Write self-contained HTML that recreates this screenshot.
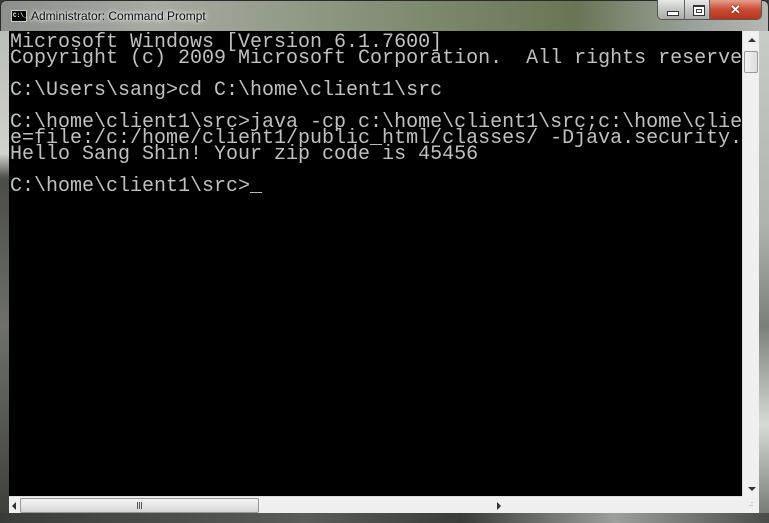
<!DOCTYPE html>
<html><head><meta charset="utf-8"><style>
*{margin:0;padding:0;box-sizing:border-box}
body{width:769px;height:523px;overflow:hidden;background:#3a3e38;position:relative;font-family:"Liberation Sans",sans-serif}
.frame{position:absolute;left:0;top:0;width:769px;height:523px;border:1px solid #2a2a2a;border-radius:6px 6px 0 0;
background:linear-gradient(90deg,#8c8f8a 0%,#a7aba4 20%,#7e8a6e 55%,#6a7555 75%,#9aa19a 90%,#b5b8b3 100%);}
.left{position:absolute;left:0;top:31px;width:9px;height:492px;background:linear-gradient(180deg,#b9bcb8 0%,#d0d2cf 25%,#9a9d99 27%,#4a4c49 30%,#6e706d 60%,#3c3e3b 100%)}
.right{position:absolute;right:0;top:31px;width:10px;height:492px;background:linear-gradient(180deg,#c9cbc8 0%,#aeb1ad 40%,#7c7f7b 60%,#d8dad7 80%,#6e716d 100%)}
.bottom{position:absolute;left:0;top:513px;width:769px;height:10px;background:linear-gradient(90deg,#3a3c39,#5a5c59 40%,#3a3c39 60%,#9c9f9b 80%,#4a4c49)}
.title{position:absolute;left:31px;top:9px;font-size:12px;color:#111;text-shadow:0 0 6px #fff,0 0 3px #fff}
.ico{position:absolute;left:11px;top:10px;width:16px;height:12px;background:#000;border:1px solid #ccc;color:#fff;font:bold 6px "Liberation Mono",monospace;line-height:10px;padding-left:1px}
.btns{position:absolute;left:657px;top:0;height:20px;width:105px;border:1px solid #555;border-top:none;border-radius:0 0 5px 5px;overflow:hidden;display:flex}
.b{height:19px;background:linear-gradient(#e8e9e8,#c4c6c4 50%,#a9aca9);border-right:1px solid #666;position:relative}
.b1{width:27px}.b2{width:26px}
.b3{width:52px;background:linear-gradient(#e7a08f,#c94b34 50%,#b8341c);border:none;color:#fff;font:bold 13px "Liberation Sans";text-align:center;line-height:19px;text-shadow:0 0 2px #600}
.b1:after{content:"";position:absolute;left:9px;top:11px;width:10px;height:3px;background:#fff;border:1px solid #333}
.b2:after{content:"";position:absolute;left:8px;top:5px;width:10px;height:8px;background:#fff;border:1px solid #333;border-top-width:2px;box-shadow:inset 0 0 0 2px #fff,inset 0 0 0 3px #444}
.con{position:absolute;left:9px;top:31px;width:733px;height:465px;background:#000;overflow:hidden}
pre{font-family:"Liberation Mono",monospace;font-size:20px;line-height:16px;color:#c0c0c0;padding:4px 0 0 1px;white-space:pre}
.vs{position:absolute;left:742px;top:31px;width:17px;height:465px;background:#f0f0f0;border-left:1px solid #ddd}
.hs{position:absolute;left:9px;top:496px;width:733px;height:17px;background:#f0f0f0;border-top:1px solid #ddd}
.corner{position:absolute;left:742px;top:496px;width:17px;height:17px;background:#f0f0f0}
.vthumb{position:absolute;left:1px;top:20px;width:14px;height:22px;border:1px solid #999;border-radius:2px;background:linear-gradient(90deg,#f2f2f2,#dcdcdc)}
.hthumb{position:absolute;left:11px;top:1px;width:239px;height:15px;border:1px solid #999;border-radius:2px;background:linear-gradient(#f2f2f2,#e6e6e6 50%,#d6d6d6)}
.grip{position:absolute;font:7px "Liberation Sans";color:#555}
.tri{position:absolute;width:0;height:0}
</style></head><body>
<div class="frame"></div>
<div class="left"></div><div class="right"></div><div class="bottom"></div>
<div class="ico">C:\_</div>
<div class="title">Administrator: Command Prompt</div>
<div class="btns"><div class="b b1"></div><div class="b b2"></div><div class="b b3">✕</div></div>
<div class="con"><pre>Microsoft Windows [Version 6.1.7600]
Copyright (c) 2009 Microsoft Corporation.  All rights reserved.

C:\Users\sang&gt;cd C:\home\client1\src

C:\home\client1\src&gt;java -cp c:\home\client1\src;c:\home\client1
e=file:/c:/home/client1/public_html/classes/ -Djava.security.policy
Hello Sang Shin! Your zip code is 45456

C:\home\client1\src&gt;_</pre></div>
<div class="vs">
 <div class="tri" style="left:5px;top:7px;border-left:4px solid transparent;border-right:4px solid transparent;border-bottom:4px solid #333"></div>
 <div class="vthumb"></div>
 <div class="tri" style="left:5px;top:456px;border-left:4px solid transparent;border-right:4px solid transparent;border-top:4px solid #333"></div>
</div>
<div class="hs">
 <div class="tri" style="left:3px;top:5px;border-top:4px solid transparent;border-bottom:4px solid transparent;border-right:4px solid #333"></div>
 <div class="hthumb"><div style="position:absolute;left:116px;top:3px;width:5px;height:7px;border-left:1px solid #555;border-right:1px solid #555"><div style="margin-left:1px;width:1px;height:7px;background:#555"></div></div></div>
 <div class="tri" style="left:488px;top:5px;border-top:4px solid transparent;border-bottom:4px solid transparent;border-left:4px solid #333"></div>
</div>
<div class="corner"><div class="grip" style="left:7px;top:5px">.:</div></div>
</body></html>
